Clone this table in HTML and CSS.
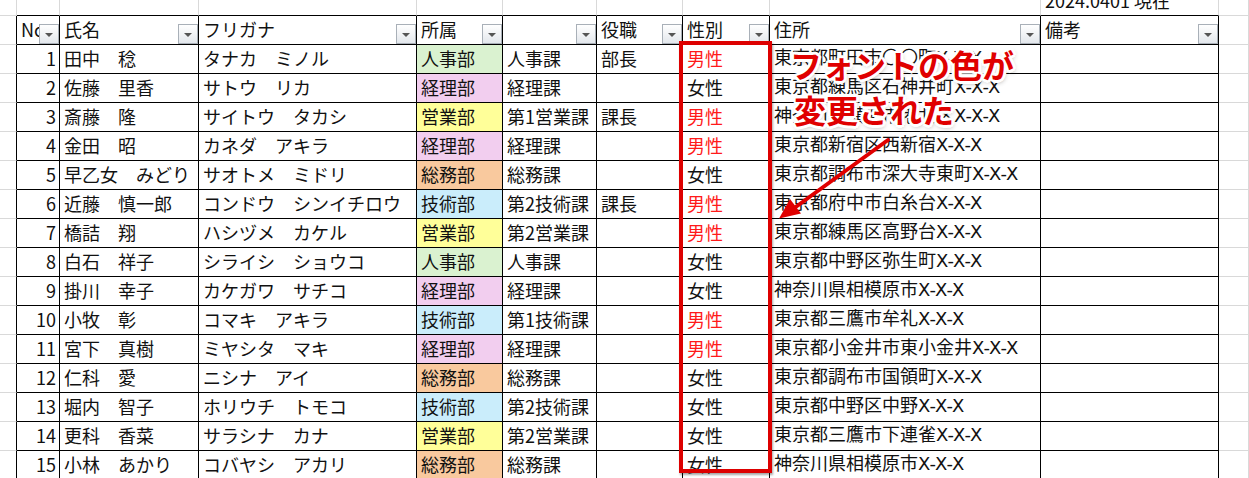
FILE: index.html
```html
<!DOCTYPE html>
<html lang="ja">
<head>
<meta charset="utf-8">
<title>社員名簿</title>
<link rel="stylesheet" href="styles.css">
</head>
<body>
<div class="page">
  <div class="sheet">
    <!-- row 1 -->
    <div class="c"></div>
    <div class="c top"></div>
    <div class="c top"></div>
    <div class="c top"></div>
    <div class="c top"></div>
    <div class="c top"></div>
    <div class="c top"></div>
    <div class="c top"></div>
    <div class="c top"></div>
    <div class="c top date"><span>2024.0401 現在</span></div>
    <div class="c"></div>

    <!-- header -->
    <div class="c e"></div>
    <div class="c t h">No<span class="dd"></span></div>
    <div class="c t h">氏名<span class="dd"></span></div>
    <div class="c t h">フリガナ<span class="dd"></span></div>
    <div class="c t h">所属<span class="dd"></span></div>
    <div class="c t h"><span class="dd"></span></div>
    <div class="c t h">役職<span class="dd"></span></div>
    <div class="c t h">性別<span class="dd"></span></div>
    <div class="c t h">住所<span class="dd"></span></div>
    <div class="c t h">備考<span class="dd"></span></div>
    <div class="c"></div>

    <div class="c e"></div><div class="c t n">1</div><div class="c t">田中　稔</div><div class="c t">タナカ　ミノル</div><div class="c t hr">人事部</div><div class="c t">人事課</div><div class="c t">部長</div><div class="c t m">男性</div><div class="c t a">東京都町田市〇〇町X-X-X</div><div class="c t"></div><div class="c"></div>
    <div class="c e"></div><div class="c t n">2</div><div class="c t">佐藤　里香</div><div class="c t">サトウ　リカ</div><div class="c t ke">経理部</div><div class="c t">経理課</div><div class="c t"></div><div class="c t">女性</div><div class="c t a">東京都練馬区石神井町X-X-X</div><div class="c t"></div><div class="c"></div>
    <div class="c e"></div><div class="c t n">3</div><div class="c t">斎藤　隆</div><div class="c t">サイトウ　タカシ</div><div class="c t ei">営業部</div><div class="c t">第1営業課</div><div class="c t">課長</div><div class="c t m">男性</div><div class="c t a">神奈川県横浜市港北区X-X-X</div><div class="c t"></div><div class="c"></div>
    <div class="c e"></div><div class="c t n">4</div><div class="c t">金田　昭</div><div class="c t">カネダ　アキラ</div><div class="c t ke">経理部</div><div class="c t">経理課</div><div class="c t"></div><div class="c t m">男性</div><div class="c t a">東京都新宿区西新宿X-X-X</div><div class="c t"></div><div class="c"></div>
    <div class="c e"></div><div class="c t n">5</div><div class="c t">早乙女　みどり</div><div class="c t">サオトメ　ミドリ</div><div class="c t so">総務部</div><div class="c t">総務課</div><div class="c t"></div><div class="c t">女性</div><div class="c t a">東京都調布市深大寺東町X-X-X</div><div class="c t"></div><div class="c"></div>
    <div class="c e"></div><div class="c t n">6</div><div class="c t">近藤　慎一郎</div><div class="c t">コンドウ　シンイチロウ</div><div class="c t gi">技術部</div><div class="c t">第2技術課</div><div class="c t">課長</div><div class="c t m">男性</div><div class="c t a">東京都府中市白糸台X-X-X</div><div class="c t"></div><div class="c"></div>
    <div class="c e"></div><div class="c t n">7</div><div class="c t">橋詰　翔</div><div class="c t">ハシヅメ　カケル</div><div class="c t ei">営業部</div><div class="c t">第2営業課</div><div class="c t"></div><div class="c t m">男性</div><div class="c t a">東京都練馬区高野台X-X-X</div><div class="c t"></div><div class="c"></div>
    <div class="c e"></div><div class="c t n">8</div><div class="c t">白石　祥子</div><div class="c t">シライシ　ショウコ</div><div class="c t hr">人事部</div><div class="c t">人事課</div><div class="c t"></div><div class="c t">女性</div><div class="c t a">東京都中野区弥生町X-X-X</div><div class="c t"></div><div class="c"></div>
    <div class="c e"></div><div class="c t n">9</div><div class="c t">掛川　幸子</div><div class="c t">カケガワ　サチコ</div><div class="c t ke">経理部</div><div class="c t">経理課</div><div class="c t"></div><div class="c t">女性</div><div class="c t a">神奈川県相模原市X-X-X</div><div class="c t"></div><div class="c"></div>
    <div class="c e"></div><div class="c t n">10</div><div class="c t">小牧　彰</div><div class="c t">コマキ　アキラ</div><div class="c t gi">技術部</div><div class="c t">第1技術課</div><div class="c t"></div><div class="c t m">男性</div><div class="c t a">東京都三鷹市牟礼X-X-X</div><div class="c t"></div><div class="c"></div>
    <div class="c e"></div><div class="c t n">11</div><div class="c t">宮下　真樹</div><div class="c t">ミヤシタ　マキ</div><div class="c t ke">経理部</div><div class="c t">経理課</div><div class="c t"></div><div class="c t m">男性</div><div class="c t a">東京都小金井市東小金井X-X-X</div><div class="c t"></div><div class="c"></div>
    <div class="c e"></div><div class="c t n">12</div><div class="c t">仁科　愛</div><div class="c t">ニシナ　アイ</div><div class="c t so">総務部</div><div class="c t">総務課</div><div class="c t"></div><div class="c t">女性</div><div class="c t a">東京都調布市国領町X-X-X</div><div class="c t"></div><div class="c"></div>
    <div class="c e"></div><div class="c t n">13</div><div class="c t">堀内　智子</div><div class="c t">ホリウチ　トモコ</div><div class="c t gi">技術部</div><div class="c t">第2技術課</div><div class="c t"></div><div class="c t">女性</div><div class="c t a">東京都中野区中野X-X-X</div><div class="c t"></div><div class="c"></div>
    <div class="c e"></div><div class="c t n">14</div><div class="c t">更科　香菜</div><div class="c t">サラシナ　カナ</div><div class="c t ei">営業部</div><div class="c t">第2営業課</div><div class="c t"></div><div class="c t">女性</div><div class="c t a">東京都三鷹市下連雀X-X-X</div><div class="c t"></div><div class="c"></div>
    <div class="c e"></div><div class="c t n">15</div><div class="c t">小林　あかり</div><div class="c t">コバヤシ　アカリ</div><div class="c t so">総務部</div><div class="c t">総務課</div><div class="c t"></div><div class="c t">女性</div><div class="c t a">神奈川県相模原市X-X-X</div><div class="c t"></div><div class="c"></div>
  </div>

  <div class="redbox"></div>
  <svg class="arrow" width="1249" height="478" viewBox="0 0 1249 478">
    <line x1="888" y1="140" x2="795" y2="207.5" stroke="#e00000" stroke-width="4" stroke-linecap="round"/>
    <polygon points="779,218.5 801,213.5 790,199" fill="#e00000"/>
  </svg>
  <div class="callout">
    <div class="l1">フォントの色が</div>
    <div class="l2">変更された</div>
  </div>
</div>
</body>
</html>
```

FILE: styles.css
```css
html, body {
  margin: 0;
  padding: 0;
  background: #fff;
}
body {
  width: 1249px;
  height: 478px;
  overflow: hidden;
  font-family: "Noto Sans CJK JP", "Noto Sans", sans-serif;
  color: #111;
}
.page {
  position: relative;
  width: 1249px;
  height: 478px;
}
.sheet {
  display: grid;
  grid-template-columns: 17px 43px 139px 218px 86px 94px 86px 87px 271px 178px 1fr;
  grid-template-rows: 16px;
  grid-auto-rows: 29px;
}
.c {
  box-sizing: border-box;
  border-right: 1px solid #d9d9d9;
  border-bottom: 1px solid #d9d9d9;
  display: flex;
  align-items: center;
  padding: 0 3px 3px 4px;
  font-size: 18px;
  line-height: 26px;
  white-space: nowrap;
  overflow: hidden;
}
.t { border-color: #000; }
.e { border-right-color: #000; }
.top { border-bottom-color: #000; }
.n { justify-content: flex-end; padding-right: 3px; }
.h { position: relative; overflow: visible; }
.date {
  align-items: flex-end;
  padding-bottom: 2px;
  overflow: hidden;
}
.m { color: #ff1a1a; }
.a { font-family: "DejaVu Sans", "Noto Sans CJK JP", sans-serif; }
.hr { background: #daf2d0; }
.ke { background: #f2ceef; }
.ei { background: #ffff99; }
.so { background: #f9c99e; }
.gi { background: #caedfb; }

.dd {
  position: absolute;
  right: 0;
  bottom: 0;
  width: 20px;
  height: 20px;
  box-sizing: border-box;
  border: 1px solid #a9b0b8;
  background: linear-gradient(#ffffff, #e3e7ec);
  z-index: 1;
}
.dd::after {
  content: "";
  position: absolute;
  left: 5px;
  top: 8px;
  border-left: 4px solid transparent;
  border-right: 4px solid transparent;
  border-top: 4px solid #555;
}

.redbox {
  position: absolute;
  left: 679px;
  top: 41px;
  width: 93px;
  height: 432px;
  box-sizing: border-box;
  border: 4px solid #dd0000;
  box-shadow: 1px 2px 2px rgba(0, 0, 0, 0.35);
  z-index: 2;
}
.arrow {
  position: absolute;
  left: 0;
  top: 0;
  z-index: 3;
}
.callout {
  position: absolute;
  left: 790px;
  top: 42px;
  z-index: 4;
  color: #e00000;
  font-family: "Noto Sans CJK JP", sans-serif;
  font-weight: 700;
  font-size: 32px;
  line-height: 45px;
  white-space: nowrap;
  text-shadow:
    2px 0 0 #fff, -2px 0 0 #fff, 0 2px 0 #fff, 0 -2px 0 #fff,
    2px 2px 0 #fff, -2px 2px 0 #fff, 2px -2px 0 #fff, -2px -2px 0 #fff,
    3px 0 0 #fff, -3px 0 0 #fff, 0 3px 0 #fff, 0 -3px 0 #fff,
    1px 2px 5px rgba(0, 0, 0, 0.45);
}
.l2 { padding-left: 4px; }
```
